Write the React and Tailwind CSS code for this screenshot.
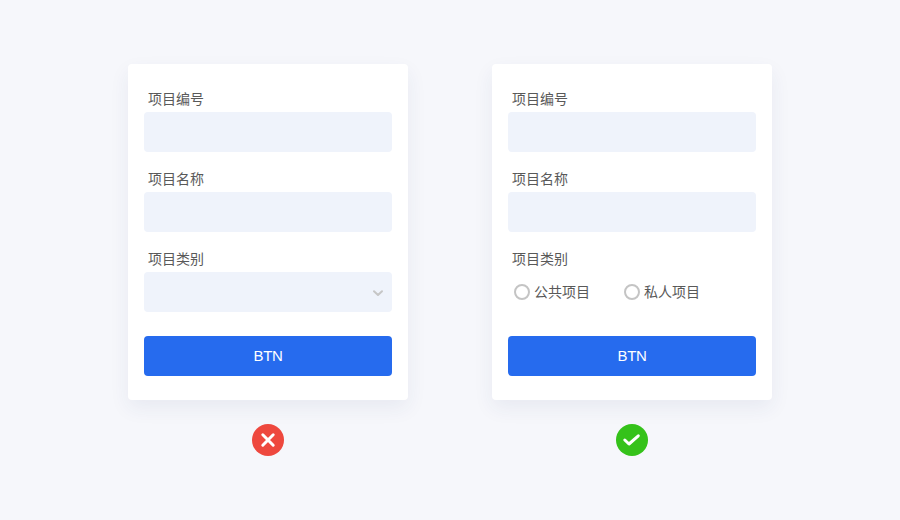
import React from "react";

const FONT = "font-['Liberation_Sans','Noto_Sans_CJK_SC',sans-serif]";

function Field({ label, children }) {
  return (
    <div className="mb-4">
      <div className="h-6 pl-1 text-sm leading-[22px] text-[#595959]">{label}</div>
      {children}
    </div>
  );
}

function Input({ children }) {
  return <div className="flex h-10 items-center justify-end rounded bg-[#eff3fb] pr-2">{children}</div>;
}

function Radio({ label, className }) {
  return (
    <div className={`flex items-center gap-1 ${className}`}>
      <span className="h-4 w-4 rounded-full border-2 border-[#c4c4c4] bg-white"></span>
      <span className="text-sm text-[#595959]">{label}</span>
    </div>
  );
}

function Card({ children }) {
  return (
    <div className="w-[280px] rounded bg-white px-4 pt-6 pb-6 shadow-[0_8px_20px_rgba(40,60,110,0.07)]">
      <Field label="项目编号"><Input /></Field>
      <Field label="项目名称"><Input /></Field>
      <Field label="项目类别">{children}</Field>
      <button className="mt-6 block h-10 w-full rounded bg-[#266bee] text-[15px] tracking-[-0.3px] text-white">BTN</button>
    </div>
  );
}

export default function App() {
  return (
    <div className={`${FONT} flex h-[520px] w-[900px] justify-center gap-[84px] bg-[#f6f7fb] pt-16`}>
      <div className="flex flex-col items-center gap-6">
        <Card>
          <Input>
            <svg width="12" height="12" viewBox="0 0 12 12" fill="none" className="mt-px">
              <path d="M2 4.2 6 8l4-3.8" stroke="#c6c6c6" strokeWidth="2" strokeLinecap="round" strokeLinejoin="round" />
            </svg>
          </Input>
        </Card>
        <div className="flex h-8 w-8 items-center justify-center rounded-full bg-[#ee483e]">
          <svg width="16" height="16" viewBox="0 0 16 16" fill="none">
            <path d="M2.8 2.8l10.4 10.4M13.2 2.8L2.8 13.2" stroke="#fff" strokeWidth="3" strokeLinecap="round" />
          </svg>
        </div>
      </div>
      <div className="flex flex-col items-center gap-6">
        <Card>
          <div className="flex h-10 items-center pl-1.5">
            <Radio label="公共项目" className="w-[110px]" />
            <Radio label="私人项目" />
          </div>
        </Card>
        <div className="flex h-8 w-8 items-center justify-center rounded-full bg-[#35c21a]">
          <svg width="20" height="16" viewBox="0 0 20 16" fill="none">
            <path d="M2.8 8l4.2 4L16.3 3.8" stroke="#fff" strokeWidth="3" strokeLinecap="round" strokeLinejoin="round" />
          </svg>
        </div>
      </div>
    </div>
  );
}
